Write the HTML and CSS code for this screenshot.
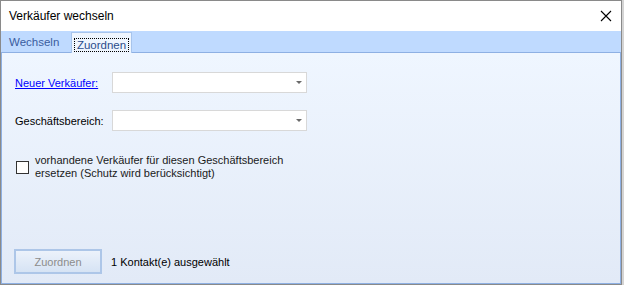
FILE: index.html
```html
<!DOCTYPE html>
<html lang="de">
<head>
    <meta charset="UTF-8">
    <title>Verkäufer wechseln</title>
    <link rel="stylesheet" href="styles.css">
</head>
<body>
    <div class="window">
        <div class="titlebar">
            <span class="title">Verkäufer wechseln</span>
            <svg class="close" width="12" height="12" viewBox="0 0 12 12">
                <path d="M1 1 L11 11 M11 1 L1 11" stroke="#000" stroke-width="1.1" fill="none"/>
            </svg>
        </div>

        <div class="tabstrip">
            <div class="tab">Wechseln</div>
            <div class="tab active"><span class="focus">Zuordnen</span></div>
        </div>

        <div class="panel">
            <div class="form-row first">
                <a href="#" class="label link">Neuer Verkäufer:</a>
                <div class="combo"><span class="arrow"></span></div>
            </div>
            <div class="form-row">
                <span class="label">Geschäftsbereich:</span>
                <div class="combo"><span class="arrow"></span></div>
            </div>

            <label class="check-row">
                <span class="checkbox"></span>
                <span class="check-text">vorhandene Verkäufer für diesen Geschäftsbereich<br>ersetzen (Schutz wird berücksichtigt)</span>
            </label>

            <div class="footer">
                <button class="btn" disabled>Zuordnen</button>
                <span class="status">1 Kontakt(e) ausgewählt</span>
            </div>
        </div>
    </div>
</body>
</html>
```

FILE: styles.css
```css
body {
    margin: 0;
    background-color: #d4d4d4;
    font-family: "Liberation Sans", Arial, sans-serif;
    font-size: 11px;
    color: #000;
}
.window {
    width: 620px;
    height: 283px;
    border: 1px solid #8a8a8a;
    background-color: #fff;
    display: flex;
    flex-direction: column;
}
.titlebar {
    height: 30px;
    display: flex;
    align-items: center;
    justify-content: space-between;
    padding: 0 8px 0 8px;
    background-color: #fff;
}
.title {
    font-size: 12px;
    color: #000;
}
.close {
    margin-right: 1px;
}
.tabstrip {
    height: 21px;
    background-color: #bfdaff;
    display: flex;
    align-items: flex-end;
    padding-left: 1px;
    font-size: 11.5px;
}
.tab {
    width: 62px;
    height: 20px;
    padding-left: 7px;
    line-height: 20px;
    color: #3a5c9e;
}
.tab.active {
    width: 59px;
    padding-left: 0;
    height: 20px;
    margin-bottom: -1px;
    border: 1px solid #a7c4ec;
    border-bottom: none;
    background-color: #eef5fe;
    display: flex;
    align-items: center;
    justify-content: center;
    color: #2a4c8c;
    position: relative;
    z-index: 1;
}
.focus {
    outline: 1px dotted #000;
    line-height: 12px;
    padding: 0 2px;
    margin-top: 3px;
}
.panel {
    flex: 1;
    border: 1px solid #8eb0e3;
    background: linear-gradient(#eff6ff, #e2eaf7);
    display: flex;
    flex-direction: column;
    padding: 0 0 9px 13px;
}
.form-row {
    display: flex;
    align-items: center;
    margin-top: 17px;
}
.form-row.first {
    margin-top: 19px;
}
.label {
    width: 97px;
}
.link {
    color: #0000ff;
    text-decoration: underline;
}
.combo {
    width: 189px;
    height: 19px;
    border: 1px solid #d8d8d8;
    background-color: #fff;
    display: flex;
    align-items: center;
    justify-content: flex-end;
    padding-right: 4px;
}
.arrow {
    width: 0;
    height: 0;
    border-left: 3px solid transparent;
    border-right: 3px solid transparent;
    border-top: 3px solid #6a6a6a;
}
.check-row {
    display: flex;
    align-items: center;
    margin-top: 23px;
    margin-left: 1px;
}
.checkbox {
    width: 11px;
    height: 11px;
    border: 1px solid #333;
    background-color: #fff;
}
.check-text {
    margin-left: 6px;
    line-height: 13px;
    color: #1a1a1a;
}
.footer {
    margin-top: auto;
    display: flex;
    align-items: center;
}
.btn {
    width: 88px;
    height: 25px;
    border: 2px solid #adc6e8;
    background: linear-gradient(#ecf2fb, #d6e3f4);
    color: #8c8c8c;
    font-family: "Liberation Sans", Arial, sans-serif;
    font-size: 11px;
    padding: 0;
    margin-left: -1px;
}
.status {
    margin-left: 9px;
}
```
